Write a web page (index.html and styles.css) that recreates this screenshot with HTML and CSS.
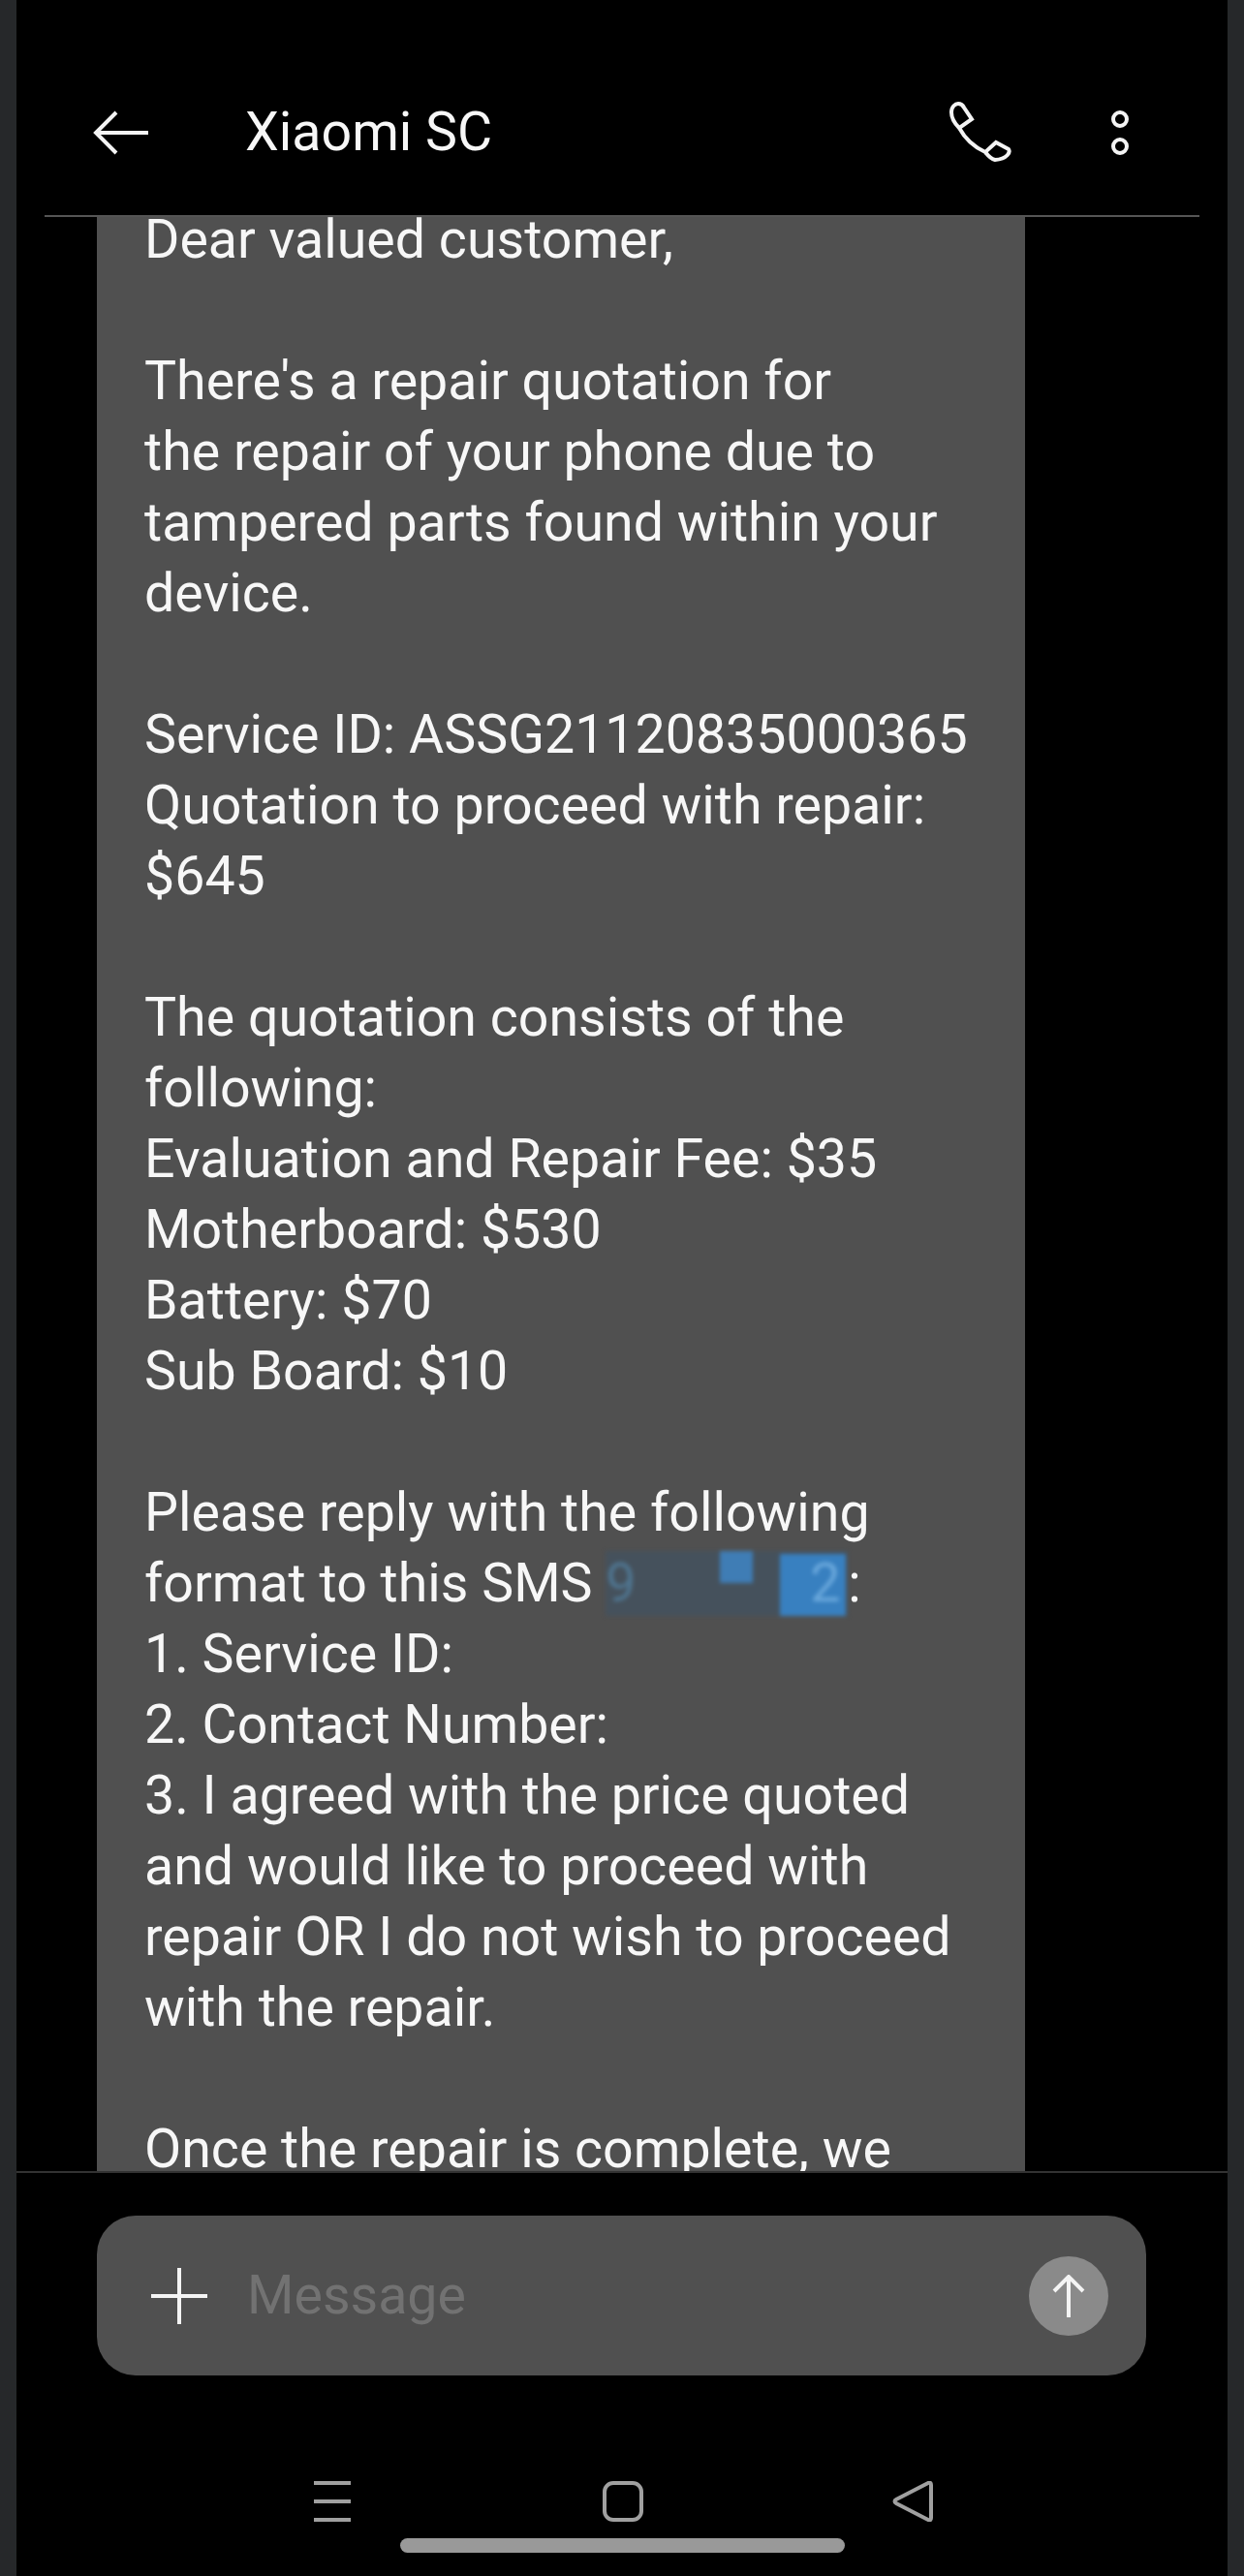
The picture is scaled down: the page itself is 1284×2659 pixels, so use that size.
FILE: index.html

```html
<!DOCTYPE html>
<html lang="en">
<head>
  <meta charset="UTF-8">
  <title>Xiaomi SC</title>
  <link rel="stylesheet" href="styles.css">
</head>
<body>

  <div class="screen">

    <header class="topbar">
      <svg class="icon-back" viewBox="0 0 58 46"><path d="M24 2 3 23l21 21M3 23h54"/></svg>
      <h1>Xiaomi SC</h1>
      <svg class="icon-call" viewBox="-2 -2 68 64"><path d="M10 25C5 20 2 14 2 9 2 3 6 0 9 0c3 0 5 2 6 4l8 12-13 9c6 11 16 20 27 25l11-10 13 7c2 3-1 10-14 11-4-1-7-4-10-8"/></svg>
      <svg class="icon-more" viewBox="0 0 20 46"><circle cx="10" cy="9" r="7"/><circle cx="10" cy="37" r="7"/></svg>
    </header>

    <main class="thread">
      <div class="bubble">
        <p>Dear valued customer,</p>
        <p>There's a repair quotation for<br>the repair of your phone due to<br>tampered parts found within your<br>device.</p>
        <p>Service ID: ASSG21120835000365<br>Quotation to proceed with repair:<br>$645</p>
        <p>The quotation consists of the<br>following:<br>Evaluation and Repair Fee: $35<br>Motherboard: $530<br>Battery: $70<br>Sub Board: $10</p>
        <p>Please reply with the following<br>format to this SMS <span class="redacted"><span class="faint">9</span><span>2</span></span>:<br>1. Service ID:<br>2. Contact Number:<br>3. I agreed with the price quoted<br>and would like to proceed with<br>repair OR I do not wish to proceed<br>with the repair.</p>
        <p>Once the repair is complete, we</p>
      </div>
    </main>

    <section class="composer">
      <div class="input-box">
        <svg class="icon-plus" viewBox="0 0 58 58"><path d="M29 0v58M0 29h58"/></svg>
        <span class="placeholder">Message</span>
        <button class="send">
          <svg viewBox="0 0 36 44"><path d="M3 17 18 2l15 15M18 2v42"/></svg>
        </button>
      </div>
    </section>

    <nav class="navbar">
      <div class="nav-icons">
        <svg class="icon-menu" viewBox="0 0 42 42"><path d="M2 2h38M2 21h38M2 40h38"/></svg>
        <svg class="icon-home" viewBox="0 0 42 42"><rect x="2" y="2" width="38" height="38" rx="9"/></svg>
        <svg class="icon-tri" viewBox="0 0 42 42"><path d="M40 4v34c0 2-1 3-3 2L4 23c-2-1-2-3 0-4L37 2c2-1 3 0 3 2Z"/></svg>
      </div>
      <div class="pill"></div>
    </nav>

  </div>

</body>
</html>
```

FILE: styles.css

```css
* {
  margin: 0;
  padding: 0;
  box-sizing: border-box;
}

html, body {
  height: 100%;
  background: #26282a;
  font-family: Roboto, 'Liberation Sans', sans-serif;
  color: #f7f7f7;
  overflow: hidden;
}

.screen {
  height: 2659px;
  margin: 0 17px;
  background: #000;
  display: flex;
  flex-direction: column;
}

svg {
  display: block;
  fill: none;
  stroke: #f4f4f4;
  stroke-width: 4;
  flex-shrink: 0;
}

/* top bar */
.topbar {
  height: 224px;
  margin: 0 29px;
  padding-top: 51px;
  border-bottom: 2px solid #555;
  display: flex;
  align-items: center;
}

.topbar h1 {
  font-size: 55.5px;
  font-weight: 400;
  margin-left: 99px;
  flex: 1;
}

.icon-back {
  width: 58px;
  height: 46px;
  margin-left: 50px;
}

.icon-call {
  width: 68px;
  height: 64px;
  margin-right: 100px;
}

.icon-more {
  width: 20px;
  height: 46px;
  margin-right: 72px;
}

/* message */
.thread {
  flex: 1;
  min-height: 0;
  overflow: hidden;
  padding-left: 83px;
}

.bubble {
  width: 958px;
  margin-top: -13px;
  padding: 0 49px;
  background: #505050;
  font-size: 55.5px;
  line-height: 73px;
}

.bubble p {
  margin-bottom: 73px;
  white-space: nowrap;
}

.redacted {
  display: inline-flex;
  justify-content: space-between;
  width: 250px;
  height: 67px;
  padding-right: 8px;
  line-height: 67px;
  color: #6aa8dc;
  background:
    linear-gradient(#3f7db5, #3f7db5) 118px 0 / 34px 33px no-repeat,
    linear-gradient(#3880c0, #3880c0) 180px 3px / 68px 64px no-repeat,
    linear-gradient(#45515c, #45515c);
  filter: blur(2px);
}

.redacted .faint {
  color: #4f7590;
}

/* composer */
.composer {
  height: 256px;
  padding: 44px 0 0 83px;
  border-top: 2px solid #333;
}

.input-box {
  width: 1083px;
  height: 165px;
  border-radius: 40px;
  background: #505050;
  display: flex;
  align-items: center;
  padding: 0 39px 0 56px;
}

.icon-plus {
  width: 58px;
  height: 58px;
}

.placeholder {
  flex: 1;
  margin-left: 41px;
  font-size: 55.5px;
  color: #727272;
}

.send {
  width: 82px;
  height: 82px;
  border: none;
  border-radius: 50%;
  background: #8a8a8a;
  display: flex;
  align-items: center;
  justify-content: center;
}

.send svg {
  width: 36px;
  height: 44px;
}

/* navigation */
.navbar {
  flex-shrink: 0;
  height: 162px;
  display: flex;
  flex-direction: column;
  align-items: center;
}

.nav-icons {
  display: flex;
  align-items: center;
  height: 123px;
  padding-top: 47px;
}

.nav-icons svg {
  width: 42px;
  height: 42px;
  stroke: #a0a0a0;
}

.nav-icons .icon-home {
  margin: 0 257px 0 258px;
}

.pill {
  width: 459px;
  height: 15px;
  border-radius: 8px;
  background: #999;
}
```
